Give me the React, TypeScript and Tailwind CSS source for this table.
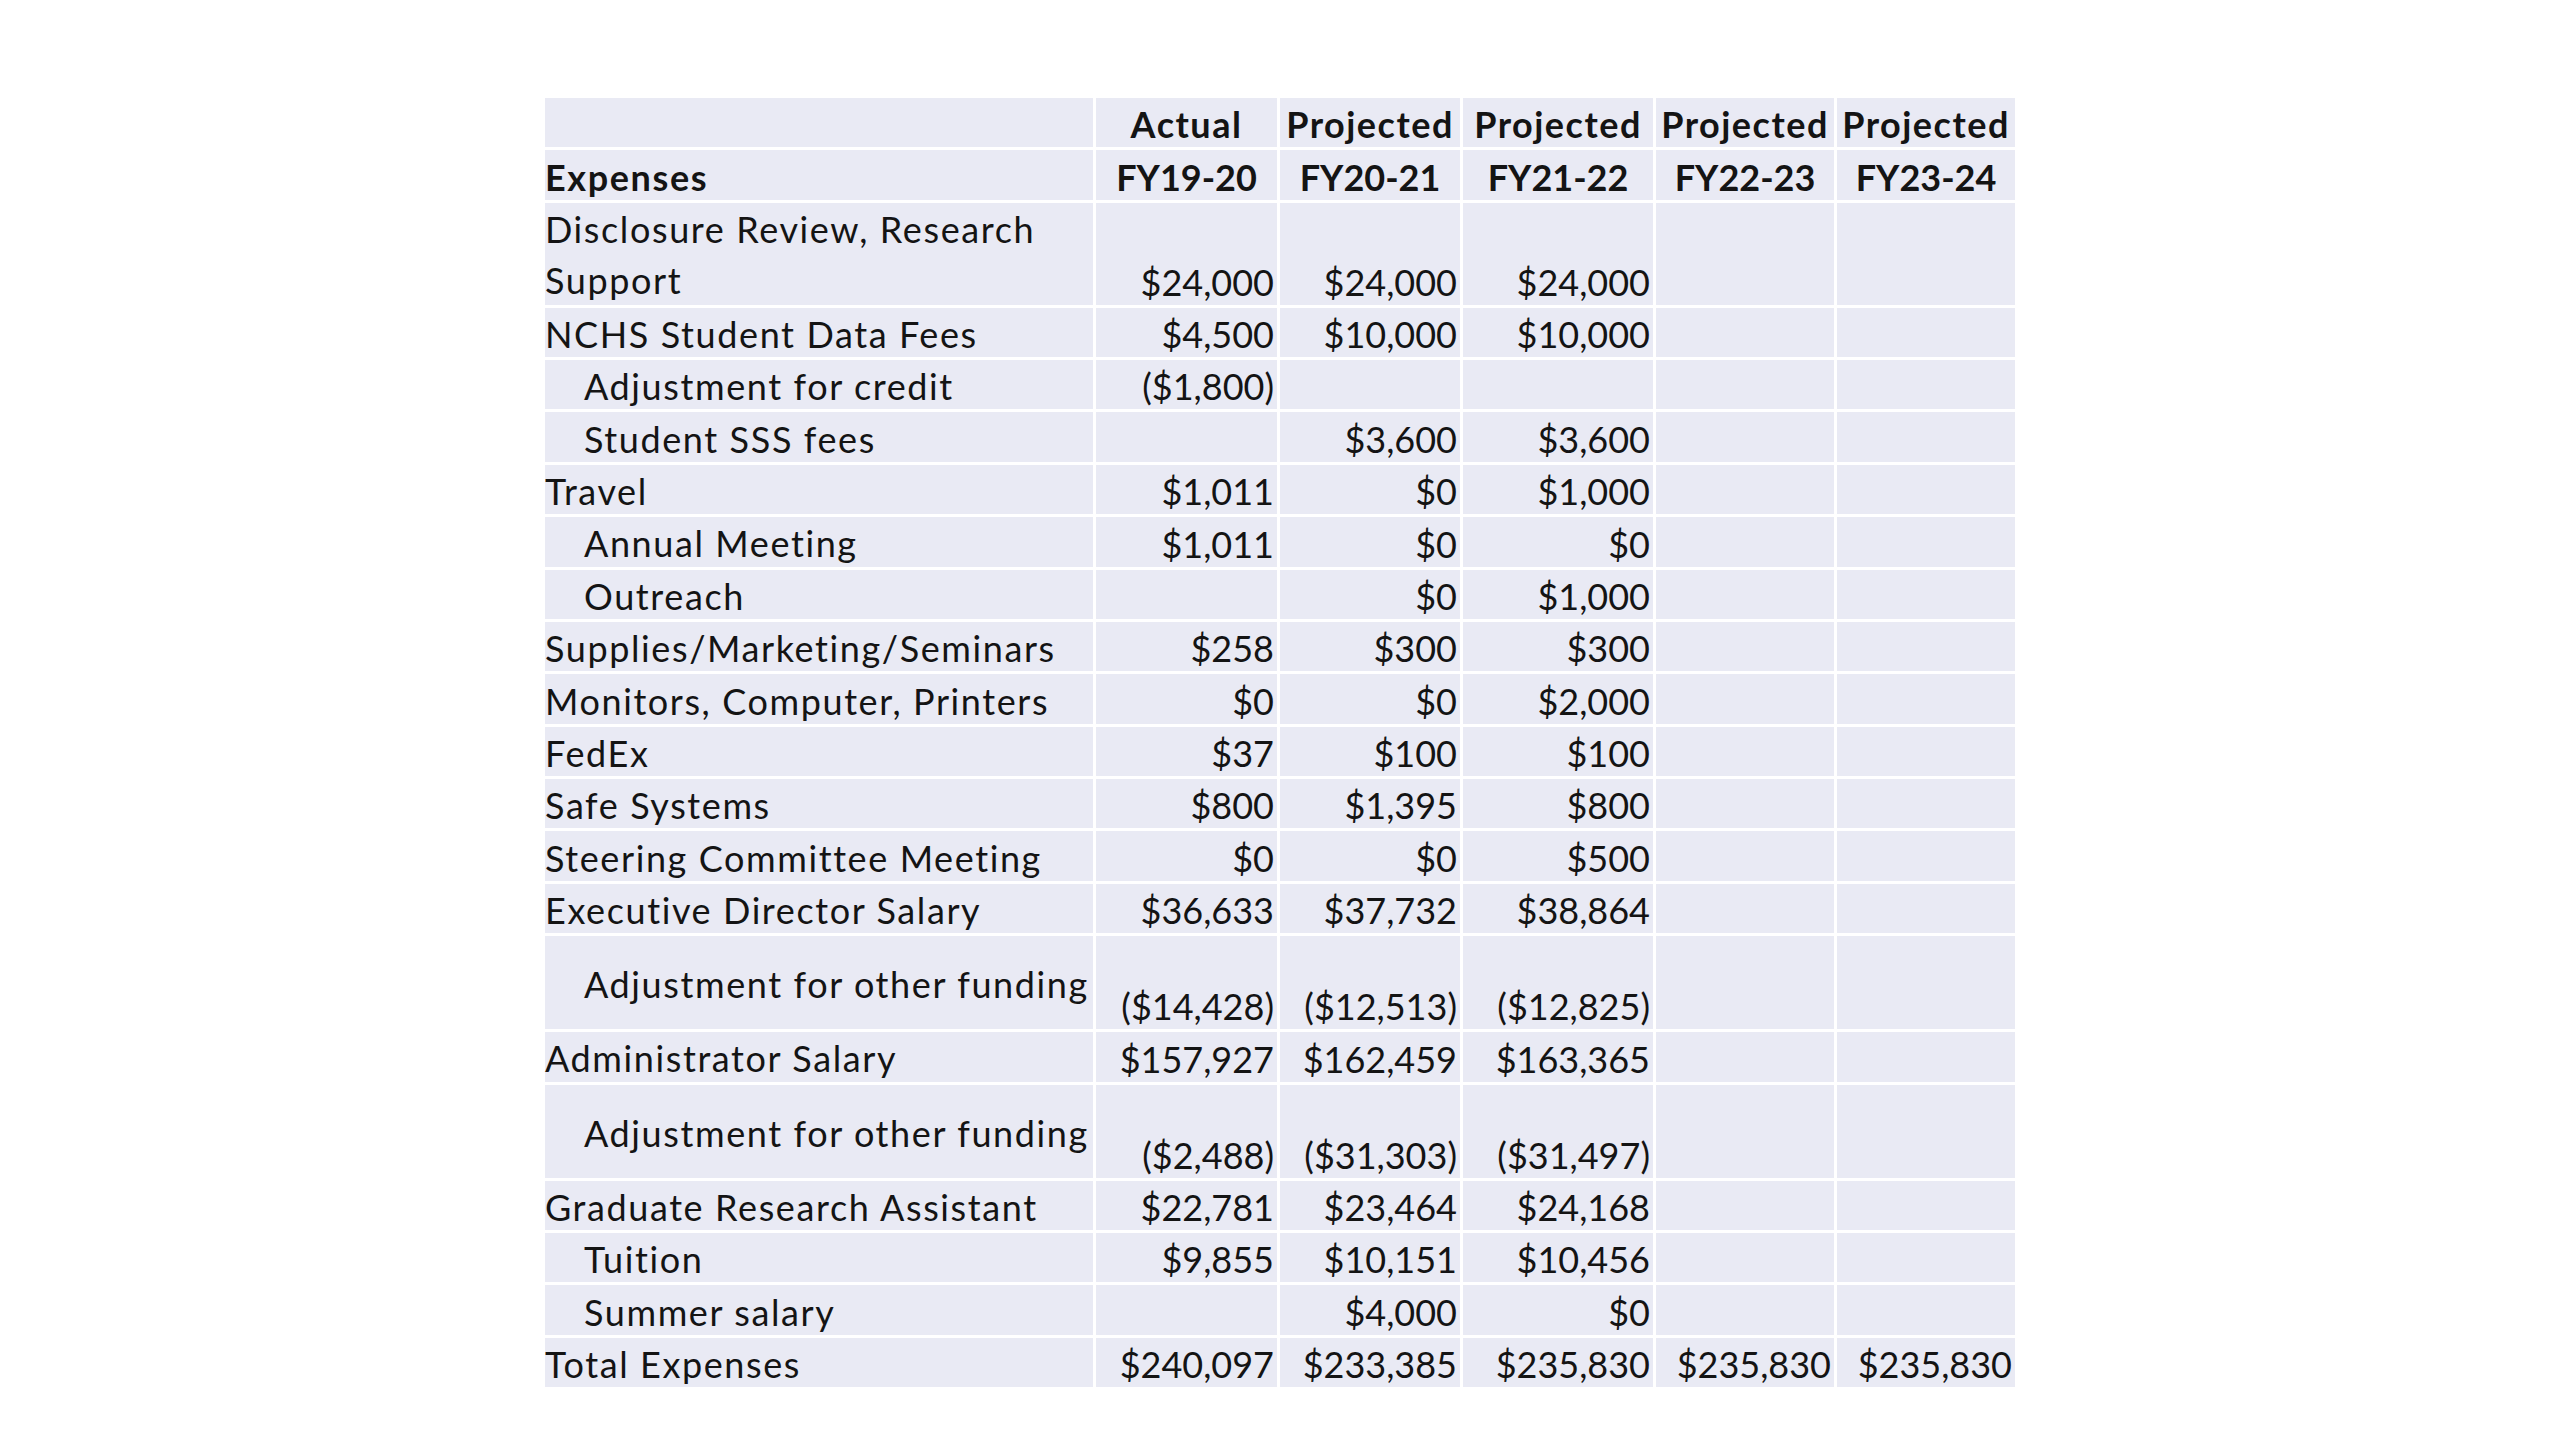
import React from 'react';

type RowKind = 'single' | 'double' | 'tall';

interface ExpenseRow {
  label: string;
  second?: string;
  indent?: boolean;
  kind?: RowKind;
  values: string[];
}

const rows: ExpenseRow[] = [
  { label: 'Disclosure Review, Research', second: 'Support', kind: 'double', values: ['$24,000', '$24,000', '$24,000', '', ''] },
  { label: 'NCHS Student Data Fees', values: ['$4,500', '$10,000', '$10,000', '', ''] },
  { label: 'Adjustment for credit', indent: true, values: ['($1,800)', '', '', '', ''] },
  { label: 'Student SSS fees', indent: true, values: ['', '$3,600', '$3,600', '', ''] },
  { label: 'Travel', values: ['$1,011', '$0', '$1,000', '', ''] },
  { label: 'Annual Meeting', indent: true, values: ['$1,011', '$0', '$0', '', ''] },
  { label: 'Outreach', indent: true, values: ['', '$0', '$1,000', '', ''] },
  { label: 'Supplies/Marketing/Seminars', values: ['$258', '$300', '$300', '', ''] },
  { label: 'Monitors, Computer, Printers', values: ['$0', '$0', '$2,000', '', ''] },
  { label: 'FedEx', values: ['$37', '$100', '$100', '', ''] },
  { label: 'Safe Systems', values: ['$800', '$1,395', '$800', '', ''] },
  { label: 'Steering Committee Meeting', values: ['$0', '$0', '$500', '', ''] },
  { label: 'Executive Director Salary', values: ['$36,633', '$37,732', '$38,864', '', ''] },
  { label: 'Adjustment for other funding', indent: true, kind: 'tall', values: ['($14,428)', '($12,513)', '($12,825)', '', ''] },
  { label: 'Administrator Salary', values: ['$157,927', '$162,459', '$163,365', '', ''] },
  { label: 'Adjustment for other funding', indent: true, kind: 'tall', values: ['($2,488)', '($31,303)', '($31,497)', '', ''] },
  { label: 'Graduate Research Assistant', values: ['$22,781', '$23,464', '$24,168', '', ''] },
  { label: 'Tuition', indent: true, values: ['$9,855', '$10,151', '$10,456', '', ''] },
  { label: 'Summer salary', indent: true, values: ['', '$4,000', '$0', '', ''] },
  { label: 'Total Expenses', values: ['$240,097', '$233,385', '$235,830', '$235,830', '$235,830'] },
];

const years = ['FY19-20', 'FY20-21', 'FY21-22', 'FY22-23', 'FY23-24'];
const kinds = ['Actual', 'Projected', 'Projected', 'Projected', 'Projected'];

const heightFor = (kind: RowKind = 'single') =>
  kind === 'double' ? 'h-[101.8px]' : kind === 'tall' ? 'h-[93px]' : 'h-[49.4px]';

// light lavender cells, white grid lines come from the gap
const cell = 'bg-[#e9eaf4] flex';

export default function App() {
  return (
    <div
      className="min-h-screen w-full bg-white pt-[98px] flex justify-center"
      style={{ fontFamily: 'Lato, "Open Sans", sans-serif' }}
    >
      <div className="w-[1470px] h-fit grid grid-cols-[548px_181px_180px_190px_178px_178px] gap-[3px] bg-white text-[36px] text-[#141414]">
        {/* header line 1 */}
        <div className={`${cell} h-[49.4px]`} />
        {kinds.map((k, i) => (
          <div
            key={`k${i}`}
            className={`${cell} h-[49.4px] items-center justify-center pt-[3px] font-bold leading-[46px] tracking-[1.5px] whitespace-nowrap`}
          >
            {k}
          </div>
        ))}

        {/* header line 2 */}
        <div className={`${cell} h-[49.4px] items-center pt-[3px] font-bold leading-[46px] tracking-[1.6px]`}>Expenses</div>
        {years.map((y) => (
          <div key={y} className={`${cell} h-[49.4px] items-center justify-center pt-[3px] font-bold leading-[46px]`}>
            {y}
          </div>
        ))}

        {rows.map((row, r) => (
          <React.Fragment key={r}>
            <div
              className={`${cell} ${heightFor(row.kind)} ${row.indent ? 'pl-[39px]' : ''} items-center pt-[3px] tracking-[1.6px] whitespace-nowrap ${
                row.kind === 'double' ? 'leading-[50.9px]' : 'leading-[46px]'
              }`}
            >
              {row.second ? (
                <span>
                  {row.label}
                  <br />
                  {row.second}
                </span>
              ) : (
                <span>{row.label}</span>
              )}
            </div>
            {row.values.map((v, c) => (
              <div
                key={c}
                className={`${cell} ${heightFor(row.kind)} items-end justify-end pr-[3px] leading-[46px] whitespace-nowrap`}
              >
                {v}
              </div>
            ))}
          </React.Fragment>
        ))}
      </div>
    </div>
  );
}
